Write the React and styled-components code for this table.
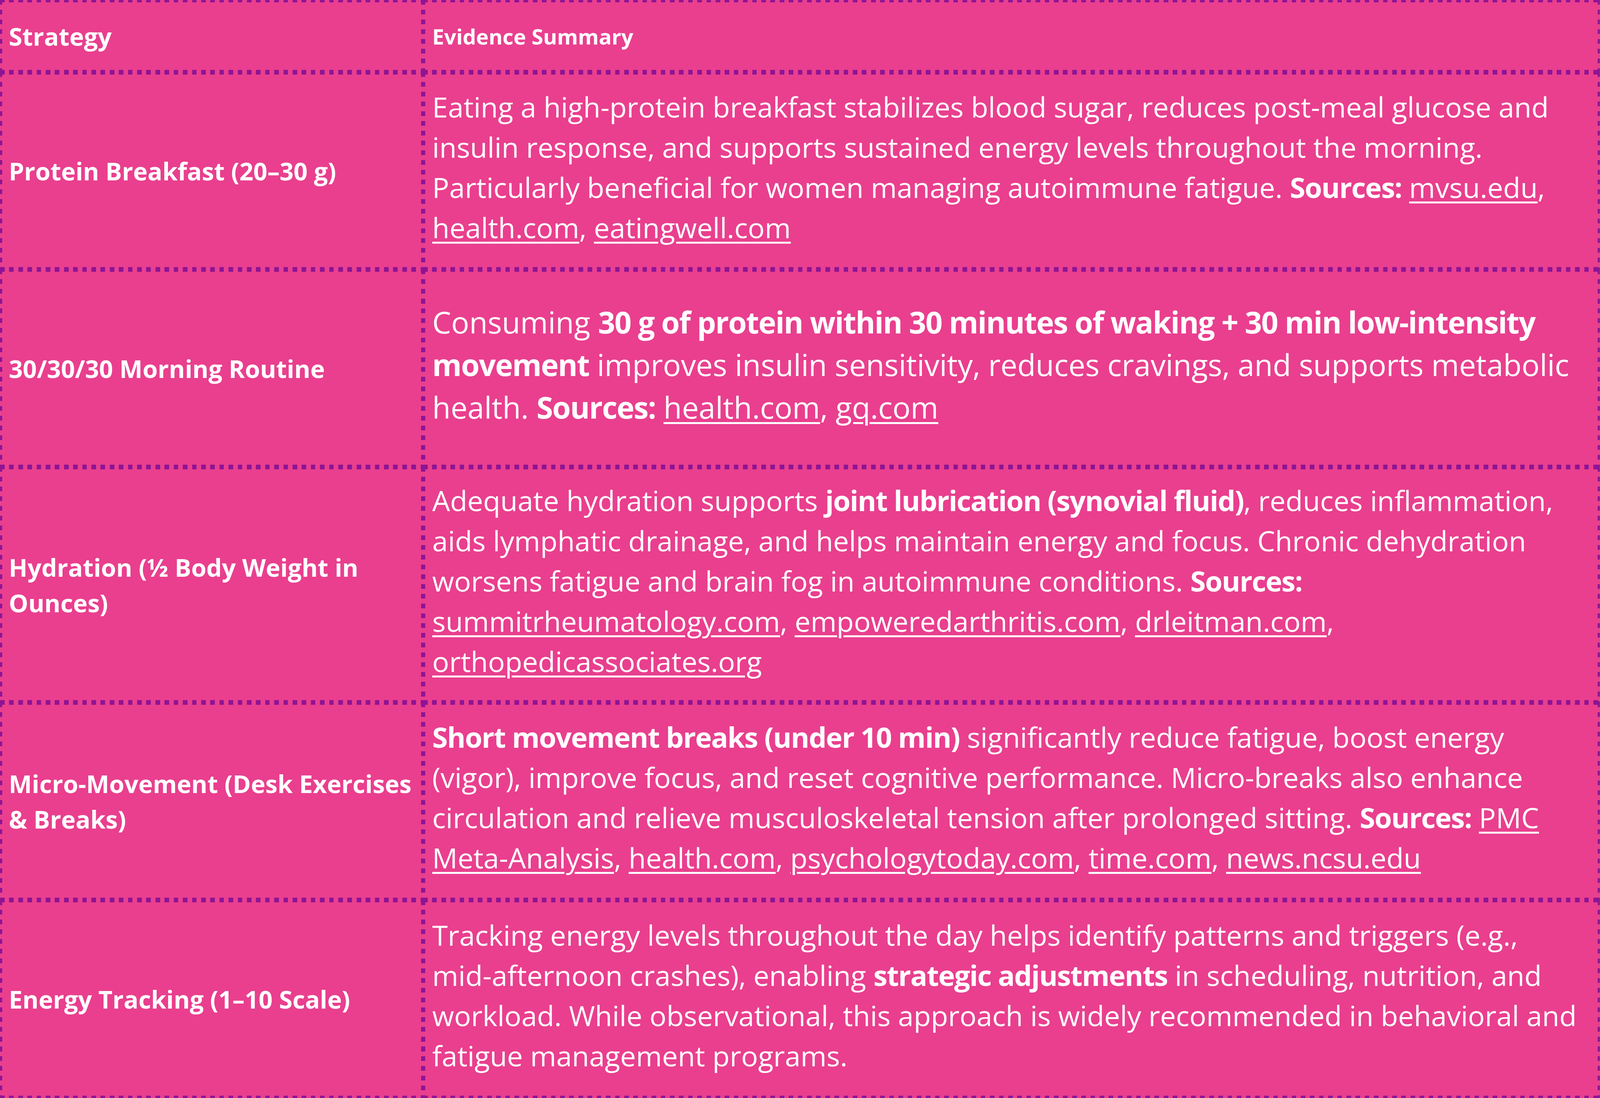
import React from 'react'
import styled, { createGlobalStyle } from 'styled-components'

const PINK = '#E93F8E'
const LINE = '#8E1494'

// the design was drawn on a 4375 x 2812 board; lengths follow the viewport
const s = n => `calc(${n} * 100vw / 4375)`
const v = n => `calc(${n} * 100vh / 2812)`

const GlobalStyle = createGlobalStyle`
    html, body {
        margin: 0;
        padding: 0;
        background: ${PINK};
        overflow: hidden;
    }
    body {
        font-family: "Open Sans", "Noto Sans", sans-serif;
        color: #fff;
    }
`

const Table = styled.div`
    width: 100vw;
    height: 100vh;
    display: grid;
    grid-template-columns: 1157fr 3218fr;
    grid-template-rows: 185fr 505fr 506fr 603fr 506fr 507fr;
`

// every cell paints half of each dotted rule, its neighbour paints the other half
const Cell = styled.div`
    display: flex;
    align-items: center;
    box-sizing: border-box;
    min-width: 0;
    min-height: 0;
    background-color: ${PINK};
    background-image:
        repeating-linear-gradient(90deg, ${LINE} 0 ${s(12.5)}, transparent ${s(12.5)} ${s(25)}),
        repeating-linear-gradient(90deg, ${LINE} 0 ${s(12.5)}, transparent ${s(12.5)} ${s(25)}),
        repeating-linear-gradient(180deg, ${LINE} 0 ${v(12.5)}, transparent ${v(12.5)} ${v(25)}),
        repeating-linear-gradient(180deg, ${LINE} 0 ${v(12.5)}, transparent ${v(12.5)} ${v(25)});
    background-size: 100% ${v(6)}, 100% ${v(6)}, ${s(6)} 100%, ${s(6)} 100%;
    background-position: left top, left bottom, left top, right top;
    background-repeat: no-repeat;
`

const StrategyCell = styled(Cell)`
    padding: 0 ${s(24)};
    font-size: ${s(67)};
    font-weight: 700;
    line-height: ${v(91)};
`

const HeadCell = styled(Cell)`
    padding: 0 ${s(30)} 0 ${s(25)};
    font-size: ${s(58)};
    font-weight: 700;
    line-height: ${v(80)};
`

const EvidenceCell = styled(Cell)`
    padding: 0 ${s(30)} ${v(20)} ${s(25)};
    font-size: ${p => p.$large ? s(82) : s(77)};
    line-height: ${p => p.$large ? v(109) : v(103)};
    font-weight: 400;
`

const Text = styled.div`
    width: 100%;
`

const B = styled.strong`
    font-weight: 700;
    letter-spacing: -0.024em;
`

const NoBreak = styled.span`
    white-space: nowrap;
`

const Link = styled.a`
    color: inherit;
    text-decoration: underline;
    text-decoration-thickness: ${v(5)};
    text-underline-offset: ${v(9)};
`

const rows = [
    {
        strategy: 'Protein Breakfast (20–30 g)',
        evidence: (
            <>
                Eating a high-protein breakfast stabilizes blood sugar, reduces post-meal glucose and insulin response,
                and supports sustained energy levels throughout the morning. Particularly beneficial for women managing
                autoimmune fatigue. <B>Sources:</B> <Link href="#">mvsu.edu</Link>, <Link href="#">health.com</Link>,{' '}
                <Link href="#">eatingwell.com</Link>
            </>
        ),
    },
    {
        strategy: '30/30/30 Morning Routine',
        large: true,
        evidence: (
            <>
                Consuming <B>30 g of protein within 30 minutes of waking + 30 min low-intensity movement</B> improves
                insulin sensitivity, reduces cravings, and supports metabolic health. <B>Sources:</B>{' '}
                <Link href="#">health.com</Link>, <Link href="#">gq.com</Link>
            </>
        ),
    },
    {
        strategy: 'Hydration (½ Body Weight in Ounces)',
        evidence: (
            <>
                Adequate hydration supports <B>joint lubrication (synovial fluid)</B>, reduces inflammation, aids
                lymphatic drainage, and helps maintain energy and focus. Chronic dehydration worsens fatigue and brain
                fog in autoimmune conditions. <B>Sources:</B> <Link href="#">summitrheumatology.com</Link>,{' '}
                <Link href="#">empoweredarthritis.com</Link>, <Link href="#">drleitman.com</Link>,{' '}
                <Link href="#">orthopedicassociates.org</Link>
            </>
        ),
    },
    {
        strategy: 'Micro-Movement (Desk Exercises & Breaks)',
        evidence: (
            <>
                <B>Short movement breaks (under 10 min)</B> significantly reduce fatigue, boost energy (vigor), improve
                focus, and reset cognitive performance. Micro-breaks also enhance circulation and relieve
                musculoskeletal tension after prolonged sitting. <B>Sources:</B> <Link href="#">PMC Meta-Analysis</Link>,{' '}
                <Link href="#">health.com</Link>, <Link href="#">psychologytoday.com</Link>,{' '}
                <Link href="#">time.com</Link>, <Link href="#">news.ncsu.edu</Link>
            </>
        ),
    },
    {
        strategy: 'Energy Tracking (1–10 Scale)',
        evidence: (
            <>
                Tracking energy levels throughout the day helps identify patterns and triggers (e.g.,{' '}
                <NoBreak>mid-afternoon</NoBreak> crashes), enabling <B>strategic adjustments</B> in scheduling,
                nutrition, and workload. While observational, this approach is widely recommended in behavioral and
                fatigue management programs.
            </>
        ),
    },
]

export default function App() {
    return (
        <>
            <GlobalStyle />
            <Table>
                <StrategyCell>
                    <Text>Strategy</Text>
                </StrategyCell>
                <HeadCell>
                    <Text>Evidence Summary</Text>
                </HeadCell>
                {rows.map(row => (
                    <React.Fragment key={row.strategy}>
                        <StrategyCell>
                            <Text>{row.strategy}</Text>
                        </StrategyCell>
                        <EvidenceCell $large={row.large}>
                            <Text>{row.evidence}</Text>
                        </EvidenceCell>
                    </React.Fragment>
                ))}
            </Table>
        </>
    )
}
